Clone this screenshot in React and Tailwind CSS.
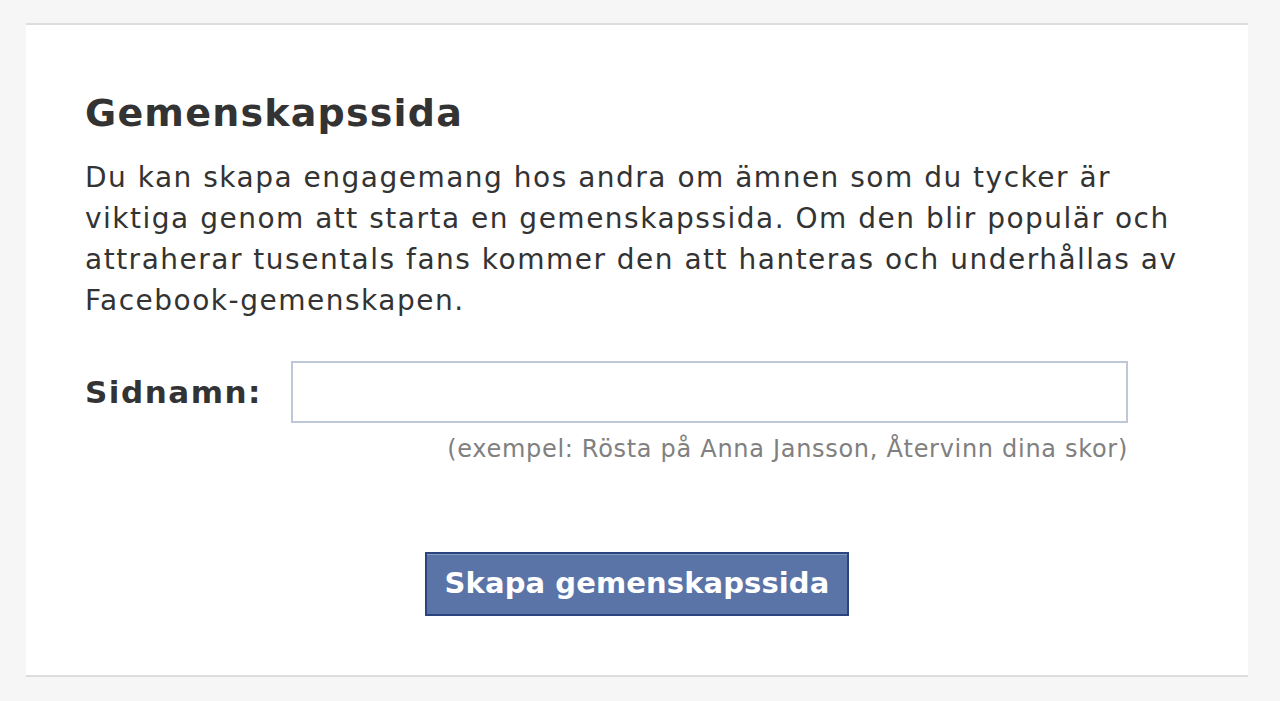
export default function App() {
  const font = { fontFamily: '"DejaVu Sans", "Lucida Grande", sans-serif' };
  return (
    <div className="w-full h-[701px] bg-[#f6f6f6] pt-[23px] pl-[26px]" style={font}>
      <div className="w-[1222px] h-[654px] bg-white border-t-2 border-b-2 border-[#dddddd] pl-[59px] pr-[20px] pt-[66px] flex flex-col">
        <h1 className="text-[38px] leading-[44px] font-bold text-[#333333] tracking-[1.2px]">Gemenskapssida</h1>
        <p className="mt-[22px] text-[28px] leading-[41px] text-[#333333] tracking-[1.5px] whitespace-nowrap">
          Du kan skapa engagemang hos andra om ämnen som du tycker är<br />
          viktiga genom att starta en gemenskapssida. Om den blir populär och<br />
          attraherar tusentals fans kommer den att hanteras och underhållas av<br />
          Facebook-gemenskapen.
        </p>
        <div className="mt-[40px] flex items-center">
          <div className="w-[206px] text-[31px] font-bold text-[#333333] tracking-[1.5px]">Sidnamn:</div>
          <div className="w-[837px] h-[62px] border-2 border-[#bdc7d8] bg-white"></div>
        </div>
        <div className="w-[1043px] mt-[11px] text-right text-[24px] leading-[30px] text-[#808080] tracking-[0.7px] whitespace-nowrap">
          (exempel: Rösta på Anna Jansson, Återvinn dina skor)
        </div>
        <div className="mt-[88px] flex justify-center -ml-[59px] w-[1222px]">
          <button className="w-[424px] h-[64px] bg-[#5b74a8] border-2 border-[#29447e] text-white font-bold text-[29px] tracking-[0.1px] shadow-[inset_0_1px_0_#8a9cc2]">
            Skapa gemenskapssida
          </button>
        </div>
      </div>
    </div>
  );
}
